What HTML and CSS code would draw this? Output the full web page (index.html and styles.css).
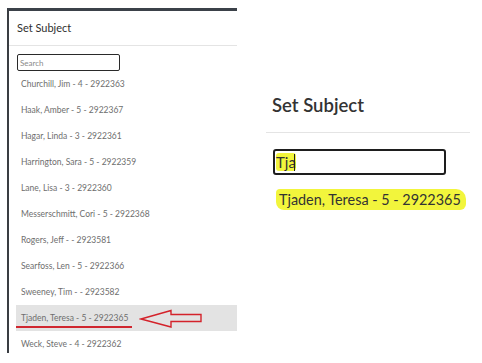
FILE: index.html
```html
<!DOCTYPE html>
<html lang="en">
<head>
  <meta charset="UTF-8">
  <title>Set Subject</title>
  <link rel="stylesheet" href="styles.css">
</head>
<body>
  <div class="dialog">
    <div class="dialog-header">Set Subject</div>
    <input class="search" type="text" placeholder="Search">
    <ul class="subjects">
      <li>Churchill, Jim - 4 - 2922363</li>
      <li>Haak, Amber - 5 - 2922367</li>
      <li>Hagar, Linda - 3 - 2922361</li>
      <li>Harrington, Sara - 5 - 2922359</li>
      <li>Lane, Lisa - 3 - 2922360</li>
      <li>Messerschmitt, Cori - 5 - 2922368</li>
      <li>Rogers, Jeff - - 2923581</li>
      <li>Searfoss, Len - 5 - 2922366</li>
      <li>Sweeney, Tim - - 2923582</li>
      <li class="selected">
        <span class="underlined">Tjaden, Teresa - 5 - 2922365</span>
        <svg class="arrow" width="64" height="20" viewBox="0 0 64 20">
          <path d="M2 10 L32 1.5 L32 5.5 L62 5.5 L62 12.5 L32 12.5 L32 18 Z" fill="none" stroke="#d4232b" stroke-width="1.4" stroke-linejoin="miter"/>
        </svg>
      </li>
      <li>Weck, Steve - 4 - 2922362</li>
    </ul>
  </div>

  <div class="zoomed">
    <div class="zoomed-header">Set Subject</div>
    <div class="field"><span class="mark">Tja</span><span class="caret"></span></div>
    <div class="result"><span class="mark wide">Tjaden, Teresa - 5 - 2922365</span></div>
  </div>
</body>
</html>
```

FILE: styles.css
```css
body {
  margin: 0;
  background: #fff;
  font-family: Lato, "Open Sans", sans-serif;
  color: #333;
  display: flex;
  align-items: flex-start;
}

.dialog {
  margin: 8px 0 0 7px;
  width: 230px;
  height: 345px;
  border-left: 2px solid #3a3d42;
  border-top: 3px solid #3b4149;
  box-sizing: border-box;
}

.dialog-header {
  height: 34px;
  line-height: 34px;
  padding-left: 8px;
  font-size: 11px;
  color: #2f2f2f;
  border-bottom: 1px solid #e4e4e4;
}

.search {
  display: block;
  margin: 8px 0 0 8px;
  width: 103px;
  height: 17px;
  box-sizing: border-box;
  border: 1.5px solid #2a2a2a;
  border-radius: 2px;
  padding: 0 2px;
  font-family: inherit;
  font-size: 8px;
  outline: none;
}

.search::placeholder {
  color: #8a8a8a;
}

.subjects {
  list-style: none;
  margin: 0;
  padding: 0;
}

.subjects li {
  height: 26px;
  line-height: 26px;
  margin-left: 7px;
  padding-left: 5px;
  font-size: 8.5px;
  color: #6e6e6e;
  white-space: nowrap;
}

.subjects li.selected {
  position: relative;
  background: #e3e3e3;
}

.underlined {
  display: inline-block;
  line-height: 15px;
  padding-right: 4px;
  margin-left: -5px;
  padding-left: 5px;
  border-bottom: 2px solid #d02730;
}

.arrow {
  position: absolute;
  left: 123px;
  top: 4px;
}

.zoomed {
  margin: 94px 0 0 29px;
  width: 204px;
}

.zoomed-header {
  height: 22px;
  line-height: 22px;
  padding: 0 0 16px 6px;
  font-size: 18.5px;
  font-weight: 600;
  color: #333;
  border-bottom: 1px solid #e4e4e4;
}

.field {
  display: flex;
  align-items: center;
  margin: 16px 0 0 7px;
  width: 173px;
  height: 26px;
  box-sizing: border-box;
  border: 2px solid #1e1e1e;
  border-radius: 3px;
  padding-left: 1px;
  font-size: 15px;
}

.mark {
  background: #f2f53c;
  border-radius: 3px;
}

.caret {
  width: 1px;
  height: 17px;
  background: #222;
  margin-left: -2px;
}

.result {
  margin: 14px 0 0 10px;
  font-size: 14.4px;
  line-height: 21px;
  white-space: nowrap;
}

.mark.wide {
  display: inline-block;
  padding: 0 5px 0 3px;
  border-radius: 4px 10px 6px 8px;
}
```
